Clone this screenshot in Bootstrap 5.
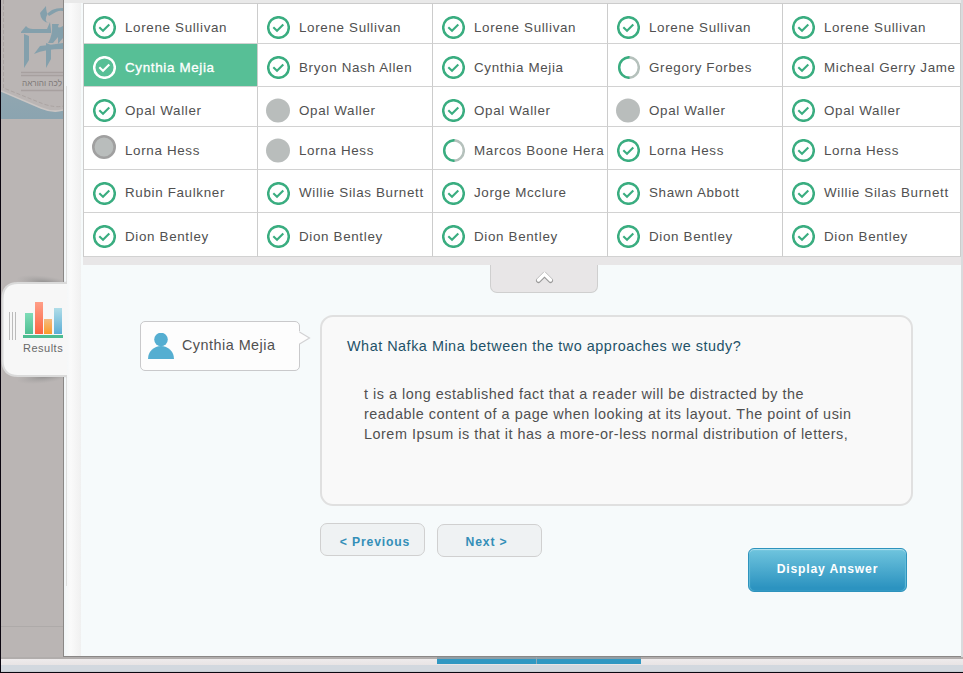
<!DOCTYPE html>
<html lang="en">
<head>
<meta charset="utf-8">
<meta name="viewport" content="width=device-width, initial-scale=1">
<title>Results</title>
<link href="https://cdn.jsdelivr.net/npm/bootstrap@5.3.0/dist/css/bootstrap.min.css" rel="stylesheet">
<style>
  html, body { height: 673px; }
  body { font-family: "Liberation Sans", Arial, sans-serif; font-size: 13px; line-height: 16px; color: #505050; background: #d9dbdd; }
  svg { display: block; }
  .stage { width: 963px; height: 673px; border-left: 1px solid #0b0610; border-bottom: 1px solid #0b0610; }
  .main-row { height: 657px; }
  .backdrop { width: 62px; background: #bab5b4; }
  .backdrop-line { height: 1px; background: #aeaaa9; margin-top: 507px; }
  .panel { width: 898px; border-left: 1px solid #8a8786; border-bottom: 1px solid #8a8786; background: #f6fafb; }
  .gutter { width: 17px; background: linear-gradient(90deg, #f1f5f7, #fafafa 40%, #f0f0f0); }
  .content { padding-left: 1px; }
  .topbar { height: 3px; background: #e9e9e9; margin-left: -18px; }
  .names { width: 878px; margin-left: 1px; border-left: 1px solid #ccc; border-top: 1px solid #ccc; background: #fff;
    grid-template-columns: 174px 175px 175px 175px 178px; grid-template-rows: 40px 43px 40px 43px 43px 44px; }
  .cell { border-right: 1px solid #ccc; border-bottom: 1px solid #d2d2d2; padding: 12px 0 0 9px; gap: 9px; font-size: 13.4px; letter-spacing: .66px; overflow: hidden; white-space: nowrap; }
  .cell > svg { width: 23px; height: 23px; flex: none; overflow: visible; }
  .cell > span { padding-top: 4px; }
  .cell:nth-child(n+21):nth-child(-n+25) > span { padding-top: 3px; }
  .cell.active { background: #57bf96; color: #fff; -webkit-text-stroke: .3px #fff; }
  .raised { margin-top: -3px; }
  .names-foot { height: 8px; background: #e8e6e7; margin-left: 1px; }
  .fold { width: 108px; height: 28px; margin-left: 408px; background: #e8e6e7; border: 1px solid #cfcfcf; border-top: 0; border-radius: 0 0 7px 7px; }
  .detail { margin-left: 58px; padding-top: 22px; gap: 20px; }
  .person { width: 160px; height: 50px; margin-top: 6px; background: #fdfdfd; border: 1px solid #c9c9cb; border-radius: 5px; padding-left: 7px; gap: 8px; font-size: 14.4px; letter-spacing: .48px; }
  .person > span { margin-top: -2px; }
  .person .tip { left: 157px; top: 9px; }
  .question { width: 593px; height: 191px; background: #f9f9f9; border: 2px solid #e0e0e0; border-radius: 13px; padding: 19px 25px; font-size: 14.4px; line-height: 20px; letter-spacing: .52px; white-space: nowrap; }
  .question h1 { font-size: 14.4px; line-height: 20px; color: #1e5268; margin: 0 0 28px; font-weight: 400; }
  .question p { margin: 0 0 0 17px; }
  .steps { margin: 17px 0 0 238px; gap: 12px; }
  .btn-step { width: 105px; height: 33px; border: 1px solid #d0d0d0; border-radius: 7px; background: #eff2f3; color: #348fb8; font-size: 12.2px; font-weight: 700; line-height: 16px; letter-spacing: .85px; padding: 4px 0 0 5px; white-space: nowrap; }
  .btn-next { margin-top: 1px; padding: 2px 6px 0 0; }
  .btn-answer { width: 159px; height: 44px; margin: -9px 0 0 666px; border: 1px solid #2e93bd; border-radius: 6px; background: linear-gradient(#70c5de, #2c93c0 92%); box-shadow: inset 0 1px 1px #b5e4f0, inset 1px 0 1px #5bb7d6, inset -1px 0 1px #5bb7d6; color: #fff; font-size: 12.2px; font-weight: 700; letter-spacing: .8px; line-height: 16px; padding: 0 0 2px; }
  .results-tab { left: 0; top: 282px; width: 66px; height: 95px; }
  .results-tab span { left: 22px; top: 60px; font-size: 11px; line-height: 12px; letter-spacing: .5px; color: #686868; }
  .under { height: 15px; background: linear-gradient(#b1adac 0 2px, #eeebec 2px, #e8e4e5 8px, #d2d8df 8px 14px, #c8cdd2 14px); }
  .bar { width: 204px; height: 7px; margin-left: 436px; background: linear-gradient(#8e9ea6 0 2px, #3198c2 2px); }
  .bar i { width: 1px; height: 7px; margin-left: 99px; background: #8fa9b5; }
  .inner-edge { left: 65px; top: 86px; width: 1px; height: 500px; background: #dedede; }
</style>
</head>
<body class="overflow-hidden">
<svg width="0" height="0" class="position-absolute">
  <defs>
    <symbol id="done" viewBox="0 0 23 23"><circle cx="11.5" cy="11.5" r="10.3" fill="none" stroke="currentColor" stroke-width="2.5"/><path d="M6.300 11.300l3.700 3.400 6.300-6.200" fill="none" stroke="currentColor" stroke-width="2.100"/></symbol>
    <symbol id="half" viewBox="0 0 23 23"><path d="M11.500 1.200a10.300 10.300 0 0 1 0 20.600" fill="none" stroke="#b5c1bc" stroke-width="2.500"/><path d="M12.500 1.200a10.300 10.300 0 1 0 0 20.600" fill="none" stroke="#3aad80" stroke-width="2.500"/></symbol>
  </defs>
</svg>
<div class="stage position-relative">
  <div class="main-row d-flex">
    <aside class="backdrop overflow-hidden">
      <svg width="62" height="119" viewBox="1 0 62 119">
        <defs><linearGradient id="pocket" x2="0" y2="1"><stop offset="0" stop-color="#91a6b0"/><stop offset="1" stop-color="#8ba4b0"/></linearGradient></defs>
        <path d="M1 91l40 17q12 5 22 2v9H1z" fill="url(#pocket)"/>
        <path d="M1 91l40 17q12 5 22 2" fill="none" stroke="#cbc6c4" stroke-width="1.500"/>
        <path d="M3.500 0v88l40 16q12 4 20 2" fill="none" stroke="#aba4a2" stroke-dasharray="4 2"/>
        <g fill="#84a0ac">
          <path d="M40 13l6-7q0 7 3 10l7-4q4-2 7-1v-3q-7 0-11 2l-4 3q-5 9 1 10-8-1-9-10z"/>
          <path d="M21 32l5-6q2 3 7 3h14l3-7 1 8v3H29l-8 0z"/>
          <path d="M24 34l5 2v24l-5 8z"/>
          <path d="M34 54l6-8q10-1 23-3v6q-18 0-29 5z"/>
          <path d="M63 26v5l-10 12h-5q5-8 4-19l7 0q-3 6 4 2z"/>
          <path d="M46 43l5 2v14l-5 9z"/>
          <path d="M58 32l5-3v9l-5 6z"/>
        </g>
        <path d="M21 72.500h42M21 75.500h42M21 90.500h42" stroke="#a7a09f" stroke-width="1.300"/>
        <text x="22" y="86" textLength="40" lengthAdjust="spacingAndGlyphs" font-family="Liberation Sans, sans-serif" font-size="9" fill="#7d7877">לכה והוראה</text>
      </svg>
      <div class="backdrop-line"></div>
    </aside>
    <main class="panel d-flex">
      <div class="gutter"></div>
      <div class="content flex-grow-1">
        <div class="topbar"></div>
        <section class="names d-grid" id="names"></section>
        <div class="names-foot"></div>
        <button class="fold d-flex justify-content-center p-0" aria-label="Collapse">
          <svg width="20" height="24" viewBox="0 0 20 24"><path d="M4.500 15.500l6-6 6 6" fill="none" stroke="#999" stroke-width="5" stroke-linejoin="round" stroke-linecap="round"/><path d="M4.500 15l6-6 6 6" fill="none" stroke="#fff" stroke-width="3.500" stroke-linecap="round"/></svg>
        </button>
        <section class="detail d-flex">
          <div class="person d-flex align-items-center position-relative flex-shrink-0">
            <svg width="26" height="26" viewBox="0 0 26 26"><circle cx="13" cy="6.500" r="6.800" fill="#55aed1"/><path d="M0 26a13 13 0 0 1 26 0z" fill="#55aed1"/></svg>
            <span>Cynthia Mejia</span>
            <svg class="tip position-absolute" width="13" height="14" viewBox="0 0 13 14"><path d="M0 0h1l10.500 7L1 13H0z" fill="#fdfdfd"/><path d="M1.500 1l10 6-10 6" fill="none" stroke="#d2d2d4" stroke-width="1.200"/></svg>
          </div>
          <article class="question flex-shrink-0">
            <h1>What Nafka Mina between the two approaches we study?</h1>
            <p>t is a long established fact that a reader will be distracted by the<br>readable content of a page when looking at its layout. The point of usin<br>Lorem Ipsum is that it has a more-or-less normal distribution of letters,</p>
          </article>
        </section>
        <div class="steps d-flex">
          <button class="btn btn-step">&lt; Previous</button>
          <button class="btn btn-step btn-next">Next &gt;</button>
        </div>
        <button class="btn btn-answer d-block">Display Answer</button>
      </div>
    </main>
  </div>
  <footer class="under"><div class="bar d-flex"><i></i></div></footer>
  <div class="inner-edge position-absolute"></div>
  <div class="results-tab position-absolute">
    <svg width="66" height="115" viewBox="0 -10 66 115" style="margin-top:-10px">
      <defs>
        <radialGradient id="shade"><stop offset="0" stop-color="#777" stop-opacity=".65"/><stop offset="1" stop-color="#999" stop-opacity="0"/></radialGradient>
        <linearGradient id="g1" x2="0" y2="1"><stop offset="0" stop-color="#7fdcb8"/><stop offset="1" stop-color="#4fbf92"/></linearGradient>
        <linearGradient id="g2" x2="0" y2="1"><stop offset="0" stop-color="#ff9f88"/><stop offset="1" stop-color="#fb6440"/></linearGradient>
        <linearGradient id="g3" x2="0" y2="1"><stop offset="0" stop-color="#f5bb80"/><stop offset="1" stop-color="#fb9b29"/></linearGradient>
        <linearGradient id="g4" x2="0" y2="1"><stop offset="0" stop-color="#b0dde8"/><stop offset="1" stop-color="#5caed6"/></linearGradient>
      </defs>
      <ellipse cx="45" cy="1" rx="30" ry="7" fill="url(#shade)" transform="rotate(8 45 1)"/>
      <ellipse cx="45" cy="94" rx="30" ry="7" fill="url(#shade)" transform="rotate(-8 45 94)"/>
      <path d="M66 1H17Q1.500 1 1.500 17v61q0 16 15.500 16h49z" fill="#f7f7f7"/>
      <path d="M66 1H17Q1.500 1 1.500 17v61q0 16 15.500 16h49" fill="none" stroke="#dadada" stroke-width="2"/>
      <path d="M8.500 30v28M11.500 30v28M14.500 30v28" stroke="#bbb"/>
      <path d="M24 31h8v21h-8z" fill="url(#g1)"/><path d="M34 20h8v32h-8z" fill="url(#g2)"/><path d="M43 37h8v15h-8z" fill="url(#g3)"/><path d="M53 26h8v26h-8z" fill="url(#g4)"/>
      <path d="M22 53h40v3H22z" fill="#4dbd91"/>
    </svg>
    <span class="position-absolute">Results</span>
  </div>
</div>
<script>
  const rows = [
    ["Lorene Sullivan", "Lorene Sullivan", "Lorene Sullivan", "Lorene Sullivan", "Lorene Sullivan"],
    ["*Cynthia Mejia", "Bryon Nash Allen", "Cynthia Mejia", "~Gregory Forbes", "Micheal Gerry Jame"],
    ["Opal Waller", "-Opal Waller", "Opal Waller", "-Opal Waller", "Opal Waller"],
    ["=Lorna Hess", "-Lorna Hess", "~Marcos Boone Hera", "Lorna Hess", "Lorna Hess"],
    ["Rubin Faulkner", "Willie Silas Burnett", "Jorge Mcclure", "Shawn Abbott", "Willie Silas Burnett"],
    ["Dion Bentley", "Dion Bentley", "Dion Bentley", "Dion Bentley", "Dion Bentley"]
  ];
  const icons = {
    "": '<svg color="#3aad80"><use href="#done"/></svg>',
    "*": '<svg color="#fff"><use href="#done"/></svg>',
    "~": '<svg><use href="#half"/></svg>',
    "-": '<svg><circle cx="11" cy="11.500" r="12" fill="#b9bdbc"/></svg>',
    "=": '<svg class="raised"><circle cx="11" cy="11" r="10.700" fill="#b9bdbc" stroke="#a0a0a0" stroke-width="2.600"/></svg>'
  };
  document.getElementById("names").innerHTML = rows.flat().map(n => {
    const k = "*~-=".includes(n[0]) ? n[0] : "";
    return `<div class="cell d-flex align-items-start${k === "*" ? " active" : ""}">${icons[k]}<span>${n.slice(k.length)}</span></div>`;
  }).join("");
</script>
<script src="https://cdn.jsdelivr.net/npm/bootstrap@5.3.0/dist/js/bootstrap.bundle.min.js"></script>
</body>
</html>
